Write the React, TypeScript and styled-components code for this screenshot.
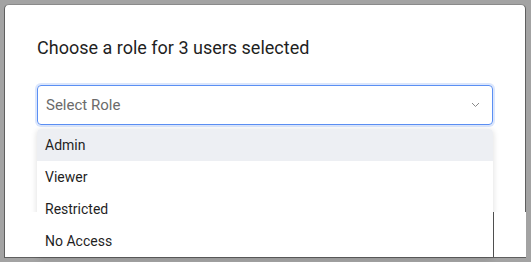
import React from "react";
import styled, { createGlobalStyle } from "styled-components";

const GlobalStyle = createGlobalStyle`
  html, body {
    margin: 0;
    padding: 0;
    background: #a3a3a3;
    font-family: Roboto, "Liberation Sans", Arial, sans-serif;
  }
  * { box-sizing: border-box; }
`;

const Backdrop = styled.div`
  width: 531px;
  height: 262px;
  padding: 4px 0 0 4px;
  overflow: hidden;
`;

const Modal = styled.div`
  width: 522px;
  height: 254px;
  background: #ffffff;
  border: 1px solid #5f5f5f;
  border-top-color: #8a8a8a;
  border-radius: 5px 5px 0 0;
  padding: 31px 32px 0;
`;

const Title = styled.h2`
  margin: 0;
  font-size: 18px;
  font-weight: 400;
  line-height: 24px;
  color: #1f1f1f;
`;

const Field = styled.div`
  position: relative;
  margin-top: 25px;
`;

const SelectBox = styled.div`
  height: 40px;
  display: flex;
  align-items: center;
  justify-content: space-between;
  padding: 0 12px 0 8px;
  border: 1px solid #5b8ff3;
  border-radius: 4px;
  box-shadow: 0 0 0 2px rgba(91, 143, 243, 0.22);
`;

const Placeholder = styled.span`
  font-size: 15px;
  color: #6b6b6b;
`;

const Menu = styled.ul`
  position: absolute;
  top: calc(100% + 4px);
  left: 0;
  right: 0;
  z-index: 2;
  margin: 0;
  padding: 0;
  list-style: none;
  background: #ffffff;
  border-radius: 4px;
  box-shadow: 0 1px 6px rgba(0, 0, 0, 0.14);

  /* lower band: shadow gone, hard right edge */
  &::before {
    content: "";
    position: absolute;
    top: 83px;
    bottom: 0;
    left: -8px;
    right: -33px;
    background: #ffffff;
    z-index: -1;
  }
  &::after {
    content: "";
    position: absolute;
    top: 83px;
    bottom: 0;
    right: -1px;
    width: 1px;
    background: #4f4f4f;
  }
`;

const Option = styled.li<{ $active?: boolean }>`
  height: 32px;
  display: flex;
  align-items: center;
  padding-left: 8px;
  font-size: 14px;
  color: #1f1f1f;
  background: ${(p) => (p.$active ? "#edeff3" : "transparent")};
  border-radius: ${(p) => (p.$active ? "4px 4px 0 0" : "0")};
`;

const Chevron = () => (
  <svg width="9" height="6" viewBox="0 0 9 6" fill="none">
    <path d="M1 1l3.5 3.5L8 1" stroke="#8a8a8a" strokeWidth="1" />
  </svg>
);

const roles = ["Admin", "Viewer", "Restricted", "No Access"];

export default function App() {
  return (
    <>
      <GlobalStyle />
      <Backdrop>
        <Modal>
          <Title>Choose a role for 3 users selected</Title>
          <Field>
            <SelectBox>
              <Placeholder>Select Role</Placeholder>
              <Chevron />
            </SelectBox>
            <Menu>
              {roles.map((r, i) => (
                <Option key={r} $active={i === 0}>
                  {r}
                </Option>
              ))}
            </Menu>
          </Field>
        </Modal>
      </Backdrop>
    </>
  );
}
